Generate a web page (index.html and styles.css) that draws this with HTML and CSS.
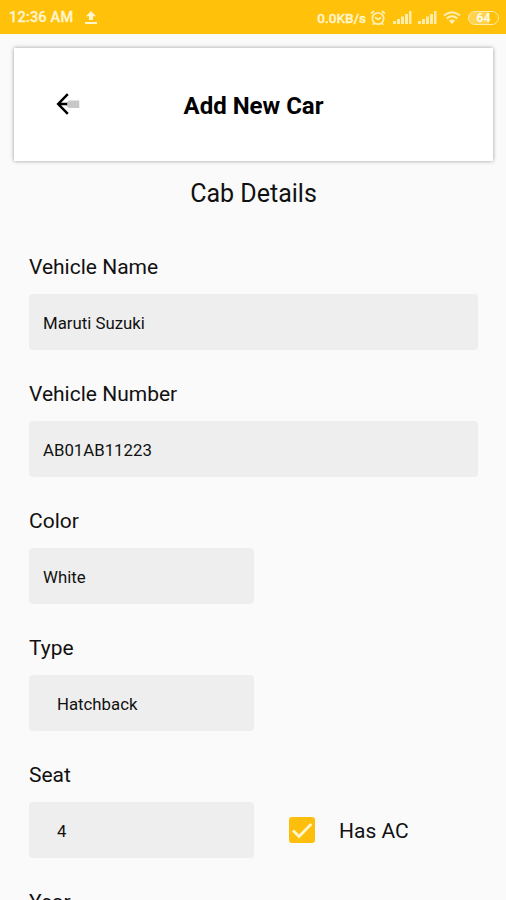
FILE: index.html
```html
<!DOCTYPE html>
<html lang="en">
<head>
<meta charset="utf-8">
<title>Add New Car</title>
<link rel="stylesheet" href="styles.css">
</head>
<body>
<div class="status">
  <span class="time">12:36 AM</span>
  <svg class="upload" width="12" height="13" viewBox="0 0 12 13"><path d="M6 0 11 5.3H8V9H4V5.3H1zM0 11h12v2H0z"/></svg>
  <span class="speed">0.0KB/s</span>
  <svg class="line alarm" width="16" height="16" viewBox="0 0 16 16"><circle cx="8" cy="8.5" r="5.7"/><path d="M5 7.3 8 9.5l3-2M1 3.5 4 1M15 3.5 12 1M4 13.3l-1.3 1.5M12 13.3l1.3 1.5"/></svg>
  <svg class="signal" width="19" height="13" viewBox="0 0 19 13"><path d="M0 10h3v3H0zM4 8h3v5H4zM8 5.500h3V13H8zM12 3h3v10h-3zM16 0h2.500v13H16z"/></svg>
  <svg class="signal second" width="19" height="13" viewBox="0 0 19 13"><path d="M0 10h3v3H0zM4 8h3v5H4zM8 5.500h3V13H8zM12 3h3v10h-3zM16 0h2.500v13H16z"/></svg>
  <svg class="line wifi" width="18" height="13" viewBox="0 0 18 13"><path d="M1 4.600Q9-2 17 4.600M3.700 7.400Q9 3 14.300 7.400"/><path class="dot" d="M5.800 9.600Q9 7.200 12.200 9.600L9 13z"/></svg>
  <span class="battery">64</span>
</div>
<header class="appbar">
  <svg class="back" width="24" height="24" viewBox="0 0 24 24"><path class="tail" d="M10 11 13 8.500h10.300V16H13l-3-2.500z"/><path class="arrow" d="M11.800 2.200 2.200 12l9.600 9.800M2.200 12h9"/></svg>
  <h1>Add New Car</h1>
</header>
<main>
  <h2>Cab Details</h2>
  <div class="field"><label>Vehicle Name</label><div class="input">Maruti Suzuki</div></div>
  <div class="field"><label>Vehicle Number</label><div class="input">AB01AB11223</div></div>
  <div class="field half"><label>Color</label><div class="input">White</div></div>
  <div class="field half"><label>Type</label><div class="input select">Hatchback</div></div>
  <div class="row">
    <div class="field half"><label>Seat</label><div class="input select">4</div></div>
    <div class="check">
      <svg width="26" height="26" viewBox="0 0 26 26"><rect width="26" height="26" rx="3"/><path d="m4 13.500 6 6L22.300 7"/></svg>
      <span>Has AC</span>
    </div>
  </div>
  <div class="field half"><label>Year</label></div>
</main>
</body>
</html>
```
FILE: styles.css
```css
* { box-sizing: border-box; }
body {
  margin: 0;
  height: 900px;
  overflow: hidden;
  background: #fafafa;
  color: #111;
  font-family: Roboto, sans-serif;
}
.status {
  height: 34px;
  padding: 1px 7px 0 9px;
  display: flex;
  align-items: center;
  background: #ffc10a;
  color: #fff5cf;
  fill: #fff5cf;
  font-size: 14.5px;
  font-weight: 500;
}
.time { letter-spacing: .2px; -webkit-text-stroke: .3px; }
.upload { margin-left: 12px; }
.speed { margin-left: auto; font-size: 13.6px; -webkit-text-stroke: .3px; }
.line { fill: none; stroke: #fff0b8; stroke-width: 1.7; }
.alarm { margin-left: 4px; }
.signal { margin-left: 7px; fill: #ffeca8; }
.signal.second { margin-left: 6px; }
.wifi { margin-left: 6px; stroke-width: 2; }
.wifi .dot { fill: #fff0b8; stroke: none; }
.battery {
  width: 31px;
  height: 14px;
  margin-left: 7px;
  border: 1.5px solid #ffeca8;
  border-radius: 7px;
  background: linear-gradient(90deg, #ffd34d 68%, transparent 68%);
  color: #fffbe8;
  font-size: 12.5px;
  font-weight: 700;
  line-height: 12px;
  text-align: center;
}
.appbar {
  display: grid;
  grid-template-columns: 100px 1fr 100px;
  align-items: center;
  height: 113px;
  margin: 14px 13px 0 14px;
  padding-top: 2px;
  background: #fff;
  box-shadow: 0 0 4px rgba(0, 0, 0, .38);
}
.back { margin: -3px 0 0 42px; }
.tail { fill: #c8c8c8; }
.arrow { fill: none; stroke: #000; stroke-width: 2.5; }
h1 {
  margin: 0;
  color: #000;
  font-size: 24px;
  font-weight: 700;
  line-height: 30px;
  text-align: center;
}
main { padding: 0 28px 0 29px; }
h2 {
  margin: 18px 0 43px;
  font-size: 25px;
  font-weight: 400;
  line-height: 30px;
  text-align: center;
}
.field { height: 127px; }
label {
  display: block;
  height: 42px;
  padding-top: 1px;
  font-size: 21px;
  line-height: 28px;
}
.input {
  height: 56px;
  padding: 1px 14px 0;
  border-radius: 4px;
  background: #eee;
  font-size: 16.8px;
  line-height: 57px;
}
.half { width: 225px; }
.select { padding-left: 28px; }
.row { display: flex; }
.check {
  display: flex;
  align-items: center;
  gap: 24px;
  height: 56px;
  margin: 42px 0 0 35px;
  font-size: 21px;
}
.check span { padding-top: 2px; }
.check rect { fill: #fdbf0c; }
.check path { fill: none; stroke: #fff5cf; stroke-width: 2.8; }
```
